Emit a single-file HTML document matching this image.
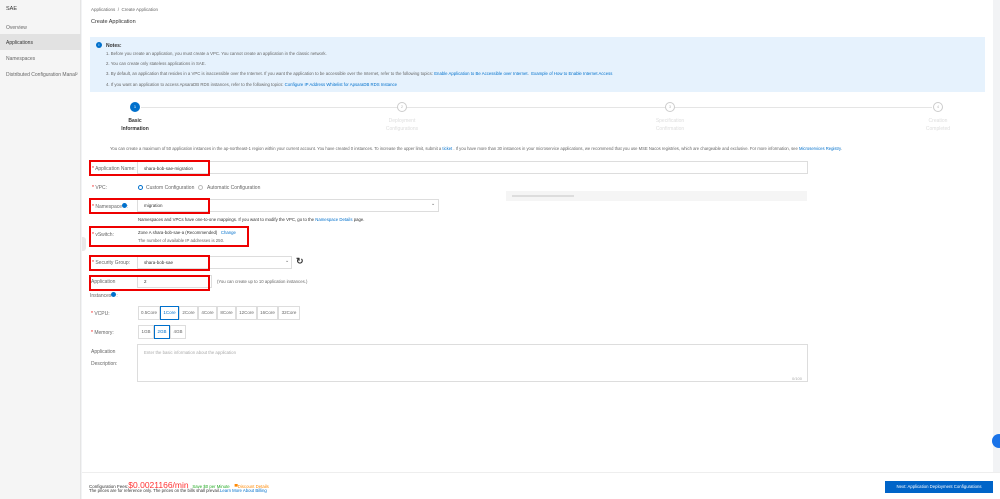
<!DOCTYPE html><html><head><style>
*{margin:0;padding:0;box-sizing:border-box}
body{width:1000px;height:499px;font-family:"Liberation Sans",sans-serif;background:#f2f3f5;position:relative;overflow:hidden;font-size:5px;color:#333}
.a{position:absolute;white-space:nowrap}
.side{left:0;top:0;width:81px;height:499px;background:#f5f5f5;border-right:1px solid #e5e5e5}
.main{left:82px;top:0;width:911px;height:472px;background:#fff}
.lnk{color:#0070cc}
.rb{position:absolute;border:2px solid #e00;}
.inp{position:absolute;border:1px solid #ddd;background:#fff}
.gr{color:#666}
.btn{position:absolute;border:1px solid #ddd;height:14px;top:0;font-size:4.5px;color:#666;text-align:center;line-height:12px}
.sel{border-color:#0070cc;color:#0070cc}
.circ{position:absolute;width:10px;height:10px;border-radius:50%;border:1px solid #ccc;background:#fff;font-size:4px;text-align:center;line-height:8px;color:#bbb}
.req{color:#e00}
</style></head><body>
<div class="a side">
 <div class="a" style="left:6px;top:6px;font-size:5.5px">SAE</div>
 <div class="a gr" style="left:6px;top:25px">Overview</div>
 <div class="a" style="left:0;top:34px;width:81px;height:16px;background:#e2e2e2"></div>
 <div class="a" style="left:6px;top:40px">Applications</div>
 <div class="a gr" style="left:6px;top:56px">Namespaces</div>
 <div class="a gr" style="left:6px;top:72px">Distributed Configuration Manal²</div>
</div>
<div class="a main"></div>
<div class="a gr" style="left:91px;top:7px;font-size:4.5px">Applications &nbsp;/&nbsp; Create Application</div>
<div class="a" style="left:91px;top:19px;font-size:5.5px">Create Application</div>
<div class="a" style="left:90px;top:37px;width:895px;height:55px;background:#e6f2fd"></div>
<div class="a" style="left:96px;top:42px;width:6px;height:6px;border-radius:50%;background:#0070cc;color:#fff;font-size:4px;text-align:center;line-height:6px">i</div>
<div class="a" style="left:106px;top:43px;font-weight:bold">Notes:</div>
<div class="a gr" style="left:106px;top:51px;font-size:4.3px">1. Before you create an application, you must create a VPC. You cannot create an application in the classic network.</div>
<div class="a gr" style="left:106px;top:61px;font-size:4.3px">2. You can create only stateless applications in SAE.</div>
<div class="a gr" style="left:106px;top:71px;font-size:4.3px">3. By default, an application that resides in a VPC is inaccessible over the Internet. If you want the application to be accessible over the Internet, refer to the following topics: <span class="lnk">Enable Application to Be Accessible over Internet</span>. &nbsp;<span class="lnk">Example of How to Enable Internet Access</span></div>
<div class="a gr" style="left:106px;top:82px;font-size:4.3px">4. If you want an application to access ApsaraDB RDS instances, refer to the following topics: <span class="lnk">Configure IP Address Whitelist for ApsaraDB RDS Instance</span></div>
<div class="a" style="left:141px;top:107px;width:791px;height:1px;background:#e5e5e5"></div>
<div class="circ" style="left:130px;top:102px;background:#0070cc;border-color:#0070cc;color:#fff">1</div>
<div class="circ" style="left:397px;top:102px">2</div>
<div class="circ" style="left:665px;top:102px">3</div>
<div class="circ" style="left:933px;top:102px">4</div>
<div class="a" style="left:135px;top:117px;transform:translateX(-50%);text-align:center;font-weight:bold;line-height:8px">Basic<br>Information</div>
<div class="a" style="left:402px;top:117px;transform:translateX(-50%);text-align:center;color:#ddd;line-height:8px">Deployment<br>Configurations</div>
<div class="a" style="left:670px;top:117px;transform:translateX(-50%);text-align:center;color:#ddd;line-height:8px">Specification<br>Confirmation</div>
<div class="a" style="left:938px;top:117px;transform:translateX(-50%);text-align:center;color:#ddd;line-height:8px">Creation<br>Completed</div>
<div class="a gr" style="left:110px;top:146px;font-size:4.2px">You can create a maximum of 50 application instances in the ap-northeast-1 region within your current account. You have created 0 instances. To increase the upper limit, submit a <span class="lnk">ticket</span> . If you have more than 30 instances in your microservice applications, we recommend that you use MSE Nacos registries, which are chargeable and exclusive. For more information, see <span class="lnk">Microservices Registry</span>.</div>

<div class="inp" style="left:137px;top:161px;width:671px;height:13px"></div>
<div class="a" style="left:144px;top:166px;font-size:4.5px">shara-bob-sae-migration</div>
<div class="rb" style="left:89px;top:160px;width:121px;height:16px"></div>
<div class="a gr" style="left:92px;top:166px"><span class="req">*</span> Application Name:</div>

<div class="a gr" style="left:92px;top:185px"><span class="req">*</span> VPC:</div>
<div class="a" style="left:138px;top:185px;width:5px;height:5px;border-radius:50%;border:1.5px solid #0070cc"></div>
<div class="a gr" style="left:146px;top:185px">Custom Configuration</div>
<div class="a" style="left:198px;top:185px;width:5px;height:5px;border-radius:50%;border:1px solid #bbb"></div>
<div class="a gr" style="left:207px;top:185px">Automatic Configuration</div>
<div class="a" style="left:506px;top:191px;width:301px;height:10px;background:#f5f5f5"></div>
<div class="a" style="left:512px;top:195px;width:62px;height:2px;background:#ddd"></div>

<div class="inp" style="left:137px;top:199px;width:302px;height:13px"></div>
<div class="a gr" style="left:431px;top:201px">⌄</div>
<div class="a" style="left:144px;top:203px;font-size:4.5px">migration</div>
<div class="rb" style="left:89px;top:198px;width:121px;height:16px"></div>
<div class="a gr" style="left:92px;top:203px"><span class="req">*</span> Namespace<span style="display:inline-block;width:5px;height:5px;border-radius:50%;background:#0070cc"></span>:</div>
<div class="a" style="left:138px;top:217px;font-size:4.3px">Namespaces and VPCs have one-to-one mappings. If you want to modify the VPC, go to the <span class="lnk">Namespace Details</span> page.</div>

<div class="rb" style="left:89px;top:226px;width:160px;height:21px"></div>
<div class="a gr" style="left:92px;top:232px"><span class="req">*</span> vSwitch:</div>
<div class="a" style="left:138px;top:230px;font-size:4.3px">Zone A shara-bob-sae-a (Recommended) &nbsp;&nbsp;<span class="lnk">Change</span></div>
<div class="a gr" style="left:138px;top:238px;font-size:4.3px">The number of available IP addresses is 250.</div>

<div class="inp" style="left:137px;top:256px;width:155px;height:13px"></div>
<div class="a gr" style="left:285px;top:258px">⌄</div>
<div class="a" style="left:296px;top:256px;font-size:9px;font-weight:bold;line-height:10px">↻</div>
<div class="a" style="left:144px;top:260px;font-size:4.5px">shara-bob-sae</div>
<div class="rb" style="left:89px;top:255px;width:121px;height:16px"></div>
<div class="a gr" style="left:92px;top:260px"><span class="req">*</span> Security Group:</div>

<div class="inp" style="left:137px;top:275px;width:75px;height:13px"></div>
<div class="a" style="left:144px;top:279px;font-size:4.5px">2</div>
<div class="rb" style="left:89px;top:275px;width:121px;height:16px"></div>
<div class="a gr" style="left:91px;top:279px">Application</div>
<div class="a gr" style="left:217px;top:279px;font-size:4.3px">(You can create up to 10 application instances.)</div>
<div class="a gr" style="left:90px;top:292px">Instances<span style="display:inline-block;width:5px;height:5px;border-radius:50%;background:#0070cc"></span>:</div>

<div class="a gr" style="left:91px;top:311px"><span class="req">*</span> VCPU:</div>
<div class="a" style="left:138px;top:306px;width:163px;height:14px">
 <div class="btn" style="left:0;width:22px">0.5Core</div><div class="btn sel" style="left:22px;width:19px">1Core</div><div class="btn" style="left:41px;width:19px">2Core</div><div class="btn" style="left:60px;width:19px">4Core</div><div class="btn" style="left:79px;width:19px">8Core</div><div class="btn" style="left:98px;width:21px">12Core</div><div class="btn" style="left:119px;width:21px">16Core</div><div class="btn" style="left:140px;width:22px">32Core</div>
</div>
<div class="a gr" style="left:91px;top:330px"><span class="req">*</span> Memory:</div>
<div class="a" style="left:138px;top:325px;width:50px;height:14px">
 <div class="btn" style="left:0;width:16px">1GB</div><div class="btn sel" style="left:16px;width:16px">2GB</div><div class="btn" style="left:32px;width:16px">4GB</div>
</div>
<div class="a gr" style="left:91px;top:349px">Application</div>
<div class="a gr" style="left:91px;top:361px">Description:</div>
<div class="inp" style="left:137px;top:344px;width:671px;height:38px"></div>
<div class="a" style="left:144px;top:350px;color:#aaa;font-size:4.3px">Enter the basic information about the application</div>
<div class="a" style="left:792px;top:376px;color:#aaa;font-size:4px">0/100</div>

<div class="a" style="left:82px;top:472px;width:918px;height:27px;background:#fff;border-top:1px solid #eee"></div>
<div class="a" style="left:89px;top:480px;font-size:4.5px">Configuration Fees:<span style="color:#f33;font-size:8.5px">$0.0021166/min</span> &nbsp;&nbsp;<span style="color:#2a2;font-size:4.3px">Save $0 per Minute</span> &nbsp;&nbsp;&nbsp;<span style="color:#f80;font-size:4.3px">▀Discount Details</span></div>
<div class="a" style="left:89px;top:488px;font-size:4.3px">The prices are for reference only. The prices on the bills shall prevail.<span class="lnk">Learn More About Billing</span></div>
<div class="a" style="left:885px;top:481px;width:108px;height:12px;background:#0064c8;color:#fff;font-size:4.3px;text-align:center;line-height:12px">Next: Application Deployment Configurations</div>
<div class="a" style="left:992px;top:434px;width:14px;height:14px;border-radius:50%;background:#1a73e8"></div>
<div class="a" style="left:82px;top:237px;width:4px;height:14px;background:#e8e8e8;border-radius:0 3px 3px 0"></div>
</body></html>
